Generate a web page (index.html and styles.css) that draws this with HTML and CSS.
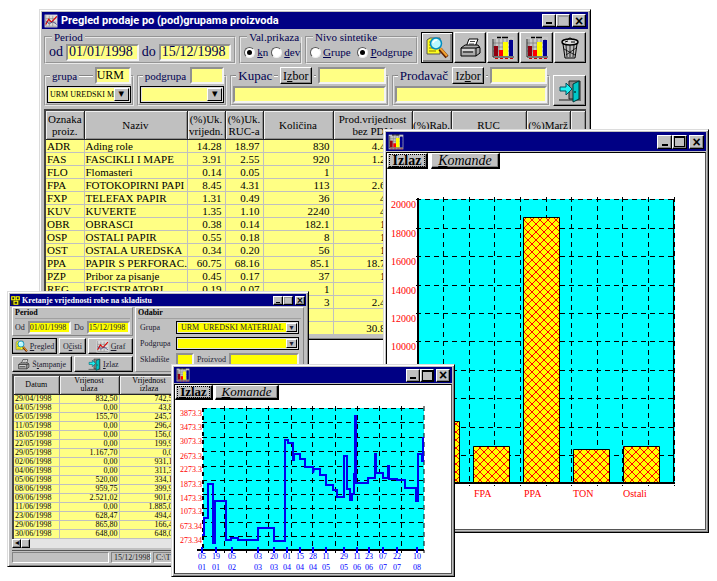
FILE: index.html
```html
<!DOCTYPE html>
<html lang="hr">
<head>
<meta charset="utf-8">
<title>Pregled prodaje po (pod)grupama proizvoda</title>
<link rel="stylesheet" href="styles.css">
</head>
<body>
<svg class="defs" aria-hidden="true">
  <symbol id="i-chart" viewBox="0 0 24 24">
    <path d="M1 1h22v22H1z" fill="#c8c8c8"/>
    <path d="M4 3v17M8 3v17M12 3v17M16 3v17M20 3v17M2 7h20M2 11h20M2 15h20" stroke="#777" stroke-width=".7"/>
    <path d="M6 1.500h4M11 1.500h6" stroke="#000" stroke-width="1.500"/>
    <path d="M3 10h4v10H3z" fill="#900010"/><path d="M8 14h4v6H8z" fill="#f00"/>
    <path d="M12 6h5v14h-5z" fill="#ff0"/><path d="M18 4h4v16h-4z" fill="#000090"/>
    <path d="M2 3v18h21" stroke="#222" fill="none"/><path d="M4 22.500h3m2 0h3m2 0h3m2 0h3" stroke="#c00"/>
  </symbol>
  <symbol id="i-find" viewBox="0 0 24 24">
    <path d="M2 4l3-2h10v16H2z" fill="#ffff20" stroke="#555"/>
    <path d="M4 6h7M4 9h7M4 12h7M4 15h7" stroke="#887700"/>
    <path d="M15 13l7 8" stroke="#602000" stroke-width="4"/><path d="M15 12l7 8" stroke="#f0a030" stroke-width="2"/>
    <circle cx="11" cy="7.500" r="5.500" fill="#b8f8ff" stroke="#008cc0" stroke-width="1.500"/>
    <path d="M8 7q1-3 4-3" stroke="#fff" fill="none" stroke-width="1.500"/>
  </symbol>
  <symbol id="i-print" viewBox="0 0 24 24">
    <path d="M8 11l3-8h9l-3 8z" fill="#fff" stroke="#000"/><path d="M12 5.500h5M11 8h5" stroke="#444"/>
    <path d="M3 12l4-3h13l2 3v5l-4 3H3z" fill="#aaa" stroke="#000"/>
    <path d="M3 12h15v8M18 12l4-1M5 16h10" fill="none" stroke="#000"/><path d="M4 14h12" stroke="#fff"/>
  </symbol>
  <symbol id="i-trash" viewBox="0 0 24 24">
    <path d="M5 8h14l-2 14H7z" fill="#bbb" stroke="#000"/>
    <path d="M8 9l1 12M12 9v12M16 9l-1 12M6 13l11 6M18 12L8 19" stroke="#000" stroke-width=".8"/>
    <ellipse cx="12" cy="6" rx="8" ry="3" fill="#ddd" stroke="#000" stroke-width="1.500"/>
    <path d="M9 4q3-4 6 0M7 6l3-1M13 6h4" stroke="#000" fill="none"/>
  </symbol>
  <symbol id="i-exit" viewBox="0 0 24 24">
    <path d="M11 2h11v18H11z" fill="#888" stroke="#222"/><path d="M1 21h22" stroke="#222"/>
    <path d="M15 5l6-3v18l-6 3z" fill="#00c8c8" stroke="#003838"/><path d="M17 12v2" stroke="#000"/>
    <path d="M2 8h6V4l6 6-6 6v-4H2z" fill="#20f0f0" stroke="#005060"/>
  </symbol>
  <symbol id="i-graph" viewBox="0 0 24 24">
    <path d="M1 1h22v22H1z" fill="#ddd"/><path d="M3 2v19h19M3 8h18M3 14h18M9 3v18M15 3v18" stroke="#777" fill="none"/>
    <path d="M3 18l5-9 5 5 9-10" stroke="#d00" fill="none" stroke-width="2"/><path d="M3 12l6 5 6-4 7 5" stroke="#448" fill="none" stroke-width="1.500"/>
  </symbol>
  <symbol id="i-app" viewBox="0 0 12 12">
    <path d="M0 0h12v12H0z" fill="#222"/><path d="M1 1h4v4H1zM7 1h4v4H7zM4 7h5v4H4z" fill="none" stroke="#ff0" stroke-width="1.500"/>
  </symbol>
</svg>

<main class="desktop">

<section class="window sales">
  <header class="title">
    <svg class="ico"><use href="#i-graph"/></svg>
    <h1>Pregled prodaje po (pod)grupama proizvoda</h1>
    <div class="caption"><button aria-label="Minimize" class="min"></button><button aria-label="Maximize" class="max off"></button><button aria-label="Close" class="close">×</button></div>
  </header>
  <div class="pane">
    <div class="row first">
      <fieldset><legend>Period</legend>
        <div class="dates"><label for="od">od</label><input id="od" value="01/01/1998"><label for="do">do</label><input id="do" value="15/12/1998"></div>
      </fieldset>
      <fieldset><legend>Val.prikaza</legend>
        <div class="radios"><label><input type="radio" name="val" checked><span><u>k</u>n</span></label><label><input type="radio" name="val"><span><u>d</u>ev</span></label></div>
      </fieldset>
      <fieldset><legend>Nivo sintetike</legend>
        <div class="radios"><label><input type="radio" name="nivo"><span><u>G</u>rupe</span></label><label><input type="radio" name="nivo" checked><span><u>P</u>odgrupe</span></label></div>
      </fieldset>
      <div class="tools">
        <button class="default" aria-label="Pregled"><svg><use href="#i-find"/></svg></button>
        <button aria-label="Ispis"><svg><use href="#i-print"/></svg></button>
        <button aria-label="Graf 1"><svg><use href="#i-chart"/></svg></button>
        <button aria-label="Graf 2"><svg><use href="#i-chart"/></svg></button>
        <button aria-label="Brisanje"><svg><use href="#i-trash"/></svg></button>
      </div>
    </div>
    <div class="row second">
      <fieldset><legend><span class="head"><label for="gr">grupa</label><i></i><input class="code" id="gr" value="URM"></span></legend>
        <span class="combo small"><select aria-label="grupa"><option>URM UREDSKI M</option></select></span>
      </fieldset>
      <fieldset><legend><span class="head"><label for="pg">podgrupa</label><i></i><input class="code" id="pg"></span></legend>
        <span class="combo small"><select aria-label="podgrupa"><option></option></select></span>
      </fieldset>
      <fieldset><legend><span class="head big"><label for="ku">Kupac</label><i></i><button>I<u>z</u>bor</button><i class="dash"></i><input class="name" id="ku"></span></legend>
        <input class="wide" aria-label="Naziv kupca">
      </fieldset>
      <fieldset><legend><span class="head big"><label for="pr">Prodavač</label><i></i><button>Iz<u>b</u>or</button><i class="dash"></i><input class="name" id="pr"></span></legend>
        <input class="wide" aria-label="Naziv prodavača">
      </fieldset>
      <div class="tools"><button aria-label="Izlaz"><svg><use href="#i-exit"/></svg></button></div>
    </div>
    <table class="grid">
      <colgroup><col class="c1"><col class="c2"><col class="c3"><col class="c3"><col class="c4"><col class="c5"><col class="c1"><col class="c6"><col class="c7"><col></colgroup>
      <thead><tr><th>Oznaka<br>proiz.</th><th>Naziv</th><th>(%)Uk.<br>vrijedn.</th><th>(%)Uk.<br>RUC-a</th><th>Količina</th><th>Prod.vrijednost<br>bez PDV</th><th>(%)Rab.</th><th>RUC</th><th>(%)Marž</th><th></th></tr></thead>
      <tbody>
      <tr><td>ADR<td>Ading role<td>14.28<td>18.97<td>830<td>4.4<td><td><td><td></tr>
      <tr><td>FAS<td>FASCIKLI I MAPE<td>3.91<td>2.55<td>920<td>1.2<td><td><td><td></tr>
      <tr><td>FLO<td>Flomasteri<td>0.14<td>0.05<td>1<td><td><td><td><td></tr>
      <tr><td>FPA<td>FOTOKOPIRNI PAPI<td>8.45<td>4.31<td>113<td>2.6<td><td><td><td></tr>
      <tr><td>FXP<td>TELEFAX PAPIR<td>1.31<td>0.49<td>36<td>4<td><td><td><td></tr>
      <tr><td>KUV<td>KUVERTE<td>1.35<td>1.10<td>2240<td>4<td><td><td><td></tr>
      <tr><td>OBR<td>OBRASCI<td>0.38<td>0.14<td>182.1<td>1<td><td><td><td></tr>
      <tr><td>OSP<td>OSTALI PAPIR<td>0.55<td>0.18<td>8<td>1<td><td><td><td></tr>
      <tr><td>OST<td>OSTALA UREDSKA<td>0.34<td>0.20<td>56<td>1<td><td><td><td></tr>
      <tr><td>PPA<td>PAPIR S PERFORAC.<td>60.75<td>68.16<td>85.1<td>18.7<td><td><td><td></tr>
      <tr><td>PZP<td>Pribor za pisanje<td>0.45<td>0.17<td>37<td>1<td><td><td><td></tr>
      <tr><td>REG<td>REGISTRATORI<td>0.19<td>0.07<td>1<td><td><td><td><td></tr>
      <tr><td><td><td><td><td>3<td>2.4<td><td><td><td></tr>
      <tr><td><td><td><td><td><td><td><td><td><td></tr>
      <tr><td><td><td><td><td><td>30.8<td><td><td><td></tr>
      </tbody>
    </table>
  </div>
</section>

<section class="window bars">
  <header class="title">
    <svg class="ico"><use href="#i-chart"/></svg>
    <div class="caption"><button aria-label="Minimize" class="min"></button><button aria-label="Maximize" class="max"></button><button aria-label="Close" class="close">×</button></div>
  </header>
  <div class="canvas">
    <nav class="menu"><button class="quit"><span><u>I</u>zlaz</span></button><button class="cmd"><u>K</u>omande</button></nav>
    <svg class="plot" viewBox="387 169 318 360">
      <defs><pattern id="hatch" width="8" height="8" patternUnits="userSpaceOnUse"><path d="M0 0h8v8H0z" fill="#ff0"/><path d="M-1-1l10 10M9-1L-1 9" stroke="#f00" stroke-width="1"/></pattern></defs>
      <path d="M418 199h257v284H418z" fill="#0ff"/>
      <path class="mesh" d="M443.500 197v289M469.500 197v289M494.500 197v289M520.500 197v289M546.500 197v289M571.500 197v289M597.500 197v289M622.500 197v289M648.500 197v289M674.500 197v289M416 199.500h260M416 228.500h260M416 256.500h260M416 285.500h260M416 313.500h260M416 341.500h260M416 370.500h260M416 398.500h260M416 427.500h260M416 455.500h260"/>
      <path d="M418 198v285h257" fill="none" stroke="#000" stroke-width="2"/><path d="M673.500 199v284" stroke="#000"/>
      <g fill="url(#hatch)" stroke="#000"><path d="M423.500 421.500h36v61h-36zM473.500 446.500h36v36h-36zM523.500 217.500h36v265h-36zM573.500 449.500h36v33h-36zM623.500 446.500h36v36h-36z"/></g>
      <g class="red" text-anchor="end"><text x="416" y="208">20000</text><text x="416" y="237">18000</text><text x="416" y="265">16000</text><text x="416" y="294">14000</text><text x="416" y="322">12000</text><text x="416" y="350">10000</text></g>
      <g class="red"><text x="474" y="497">FPA</text><text x="524" y="497">PPA</text><text x="573" y="497">TON</text><text x="623" y="497">Ostali</text></g>
    </svg>
  </div>
</section>

<section class="window stock">
  <header class="title">
    <svg class="ico"><use href="#i-app"/></svg>
    <h2>Kretanje vrijednosti robe na skladistu</h2>
    <div class="caption"><button aria-label="Minimize" class="min"></button><button aria-label="Maximize" class="max off"></button><button aria-label="Close" class="close">×</button></div>
  </header>
  <div class="pane">
    <div class="filters">
      <div class="left">
        <div class="box"><h3>Period</h3>
          <div class="range"><label for="od2">Od</label><input id="od2" value="01/01/1998"><label for="do2">Do</label><input id="do2" value="15/12/1998"></div>
        </div>
        <div class="acts three"><button class="default"><svg><use href="#i-find"/></svg><span><u>P</u>regled</span></button><button><span>O<u>č</u>isti</span></button><button><svg><use href="#i-graph"/></svg><span><u>G</u>raf</span></button></div>
        <div class="acts"><button><svg><use href="#i-print"/></svg><span>Š<u>t</u>ampanje</span></button><button><svg><use href="#i-exit"/></svg><span><u>I</u>zlaz</span></button></div>
      </div>
      <div class="box choice"><h3>Odabir</h3>
        <div class="form">
          <label for="g3">Grupa</label><span class="combo"><select id="g3"><option>URM&nbsp; UREDSKI MATERIJAL</option></select></span>
          <label for="p3">Podgrupa</label><span class="combo"><select id="p3"><option></option></select></span>
          <label for="s3">Skladište</label><div class="pair"><input id="s3"><label for="z3">Proizvod</label><input id="z3"></div>
        </div>
      </div>
    </div>
    <table class="grid">
      <colgroup><col class="d1"><col class="d2"><col class="d2"><col></colgroup>
      <thead><tr><th>Datum</th><th>Vrijenost<br>ulaza</th><th>Vrijednost<br>izlaza</th><th></th></tr></thead>
      <tbody>
      <tr><td>29/04/1998<td>832,50<td>742,5<td></tr>
      <tr><td>04/05/1998<td>0,00<td>43,8<td></tr>
      <tr><td>05/05/1998<td>155,70<td>245,7<td></tr>
      <tr><td>11/05/1998<td>0,00<td>296,4<td></tr>
      <tr><td>18/05/1998<td>0,00<td>156,0<td></tr>
      <tr><td>22/05/1998<td>0,00<td>199,9<td></tr>
      <tr><td>29/05/1998<td>1.167,70<td>0,0<td></tr>
      <tr><td>02/06/1998<td>0,00<td>931,1<td></tr>
      <tr><td>04/06/1998<td>0,00<td>311,3<td></tr>
      <tr><td>05/06/1998<td>520,00<td>334,1<td></tr>
      <tr><td>08/06/1998<td>959,75<td>399,9<td></tr>
      <tr><td>09/06/1998<td>2.521,02<td>901,6<td></tr>
      <tr><td>11/06/1998<td>0,00<td>1.885,0<td></tr>
      <tr><td>23/06/1998<td>628,47<td>494,4<td></tr>
      <tr><td>29/06/1998<td>865,80<td>166,4<td></tr>
      <tr><td>30/06/1998<td>648,00<td>648,0<td></tr>
      </tbody>
    </table>
    <div class="scroll"><button aria-label="Lijevo">◂</button><button aria-label="Klizač"></button></div>
    <footer class="status"><span></span><span>15/12/1998</span><span>C:\TEMP</span></footer>
  </div>
</section>

<section class="window trend">
  <header class="title">
    <svg class="ico"><use href="#i-chart"/></svg>
    <div class="caption"><button aria-label="Minimize" class="min"></button><button aria-label="Maximize" class="max"></button><button aria-label="Close" class="close">×</button></div>
  </header>
  <div class="canvas">
    <nav class="menu"><button class="quit"><span><u>I</u>zlaz</span></button><button class="cmd"><u>K</u>omande</button></nav>
    <svg class="plot" viewBox="175 400 276 173">
      <path d="M203 408h221v142H203z" fill="#0ff"/>
      <path class="mesh" d="M224.500 406v147M246.500 406v147M268.500 406v147M291.500 406v147M312.500 406v147M335.500 406v147M357.500 406v147M379.500 406v147M401.500 406v147M424 406v147M202 408.500h223M202 422.500h223M202 437.500h223M202 451.500h223M202 466.500h223M202 480.500h223M202 494.500h223M202 508.500h223M202 522.500h223M202 536.500h223"/>
      <path d="M197 550h227" stroke="#000" stroke-width="2"/><path d="M203 408v142" stroke="#000" stroke-width="2" stroke-dasharray="4 4"/>
      <path d="M202 547v6M216 547v6M232 547v6M258 547v6M274 547v6M287 547v6M300 547v6M313 547v6M326 547v6M344 547v6M357 547v6M369 547v6M383 547v6M397 547v6M417 547v6" stroke="#00f" stroke-width="2"/>
      <polyline fill="none" stroke="#0000f0" stroke-width="2" points="202,535 204,535 204,518 208,518 208,484 213,484 213,543 215,543 215,501 226,501 226,540 231,540 231,538 238,538 238,540 258,540 258,528 274,528 274,541 285,541 285,440 288,440 288,443 293,443 293,460 294,460 294,454 300,454 300,459 305,459 305,467 313,467 313,473 314,469 320,469 320,475 326,475 326,485 333,485 333,490 337,490 337,497 344,497 344,456 347,456 347,489 350,489 350,500 352,500 352,494 354,494 354,474 355,474 355,416 356,416 356,483 368,483 368,478 375,478 375,454 376,454 376,473 383,473 383,478 388,478 388,466 389,466 389,479 397,479 397,480 405,480 405,488 416,488 416,501 418,501 418,454 422,454 422,461 423,461 423,437"/>
      <g class="ticks y" text-anchor="end"><text x="202" y="416">3873.3</text><text x="202" y="430">3473.3</text><text x="202" y="444">3073.3</text><text x="202" y="459">2673.3</text><text x="202" y="472">2273.3</text><text x="202" y="487">1873.3</text><text x="202" y="501">1473.3</text><text x="202" y="514">1073.3</text><text x="202" y="529">673.34</text><text x="202" y="543">273.34</text></g>
      <g class="ticks x" text-anchor="middle"><text x="202" y="559">05</text><text x="216" y="559">19</text><text x="232" y="559">05</text><text x="258" y="559">03</text><text x="274" y="559">20</text><text x="287" y="559">01</text><text x="300" y="559">15</text><text x="313" y="559">28</text><text x="326" y="559">11</text><text x="344" y="559">29</text><text x="357" y="559">11</text><text x="369" y="559">23</text><text x="383" y="559">07</text><text x="397" y="559">22</text><text x="417" y="559">10</text>
      <text x="202" y="570">01</text><text x="216" y="570">01</text><text x="232" y="570">02</text><text x="258" y="570">03</text><text x="274" y="570">03</text><text x="287" y="570">04</text><text x="300" y="570">04</text><text x="313" y="570">04</text><text x="326" y="570">05</text><text x="344" y="570">05</text><text x="357" y="570">06</text><text x="369" y="570">06</text><text x="383" y="570">07</text><text x="397" y="570">07</text><text x="417" y="570">08</text></g>
    </svg>
  </div>
</section>

</main>
</body>
</html>
```

FILE: styles.css
```css
* { box-sizing: border-box; }
body { margin: 0; background: #fff; overflow: hidden; font-family: "Liberation Serif", serif; font-size: 11px; color: #000; }
.defs { position: absolute; width: 0; height: 0; }
.desktop { position: relative; min-height: 100vh; }
h1, h2, h3 { margin: 0; }
button, input, select { font: inherit; color: inherit; margin: 0; padding: 0; border-radius: 0; min-width: 0; }

/* windows */
.window { position: absolute; background: #c0c0c0; border: 1px solid; border-color: #dcdcdc #000 #000 #dcdcdc; padding: 2px; box-shadow: inset 1px 1px #fff, inset -1px -1px #848484; }
.sales { left: 39px; top: 9px; width: 552px; }
.bars { left: 383px; top: 129px; width: 326px; }
.stock { left: 7px; top: 291px; width: 302px; }
.trend { left: 171px; top: 364px; width: 284px; }

.title { display: flex; align-items: center; gap: 3px; height: 17px; padding: 0 2px; background: #000084; color: #fff; }
.bars .title { height: 20px; border-bottom: 1px solid #c0c0c0; }
.trend .title { border-bottom: 1px solid #c0c0c0; }
.title h1 { font: bold 11px Roboto, "Liberation Sans", sans-serif; white-space: nowrap; }
.title h2 { font: bold 8px "Liberation Serif", serif; white-space: nowrap; }
.ico { width: 14px; height: 14px; }
.bars .ico { width: 16px; height: 16px; }
.caption { display: flex; margin-left: auto; }
.caption button { width: 14px; height: 13px; background: #c0c0c0; border: 1px solid; border-color: #fff #000 #000 #fff; box-shadow: inset -1px -1px #848484; color: #000; display: grid; place-items: center; font: bold 14px/10px "Liberation Sans", sans-serif; }
.caption .close { margin-left: 2px; }
.bars .caption button { width: 15px; height: 14px; }
.min::before { content: ""; width: 6px; height: 2px; background: #000; align-self: end; margin-bottom: 2px; }
.max::before { content: ""; width: 9px; height: 8px; border: 1px solid #000; border-top-width: 2px; }
.caption .off::before { border-color: #999; }

/* form groups */
.pane { padding: 2px; }
.row { display: grid; }
.first { grid-template-columns: 193fr 63fr 113fr 166fr; gap: 3px; }
.second { grid-template-columns: 90fr 91fr 159fr 159fr 33fr; gap: 3px; margin-top: 3px; }
fieldset { min-width: 0; margin: 0; padding: 0 3px 1px; border: 2px groove #e8e8e8; }
legend { padding: 0 2px; margin-left: 3px; font-size: 11px; line-height: 12px; color: #000050; white-space: nowrap; }
.dates, .radios { display: flex; align-items: center; gap: 3px; height: 18px; color: #000050; font-size: 14px; }
.dates input { flex: 1; height: 17px; padding-left: 1px; }
.radios { font-size: 11px; white-space: nowrap; justify-content: space-between; }
.radios label { display: flex; align-items: center; gap: 2px; }
.radios input { appearance: none; width: 11px; height: 11px; border-radius: 50%; background: #fff; border: 1px solid; border-color: #555 #eee #eee #555; display: grid; place-items: center; }
.radios input:checked::before { content: ""; width: 5px; height: 5px; border-radius: 50%; background: #000; }
input, select { background: #ffff84; border: 2px solid; border-color: #909090 #f4f4f4 #f4f4f4 #909090; outline: 0; }

.second fieldset { padding: 0 1px 1px; }
.second legend { width: 100%; margin: 0; padding: 0; }
.head { display: flex; align-items: center; height: 17px; gap: 2px; }
.head.big { font-size: 13px; }
.head i, .head::before { content: ""; flex: 1; border-top: 1px solid #848484; border-bottom: 1px solid #fff; }
.head::before { flex: 0 0 3px; }
.head input { height: 17px; font-size: 12px; color: #000; }
.head .code { width: 36px; }
.head .name { width: 68px; }
.head .dash { flex: 0 0 2px; }
.head button { flex: none; width: 32px; height: 17px; font-size: 12px; line-height: 12px; color: #000; }
.wide { display: block; width: 100%; height: 17px; margin-top: 2px; }
.combo { display: flex; position: relative; }
.combo select { appearance: none; width: 100%; height: 17px; margin-top: 2px; border: 1px solid #000; outline: 1px solid #e0e0e0; outline-offset: -2px; padding-left: 4px; }
.combo.small select { font-size: 8px; padding-left: 2px; }
.combo::after { content: "▾"; position: absolute; right: 2px; top: 4px; bottom: 2px; width: 13px; background: #c0c0c0; border: 1px solid; border-color: #fff #000 #000 #fff; font: 11px/9px "DejaVu Sans", sans-serif; text-align: center; pointer-events: none; }

button { background: #c0c0c0; border: 1px solid; border-color: #fff #000 #000 #fff; box-shadow: inset -1px -1px #848484; }
.tools { display: flex; align-self: center; gap: 1px; }
.tools button { flex: 1; height: 31px; display: grid; place-items: center; }
.tools svg { width: 24px; height: 24px; }
.second .tools { align-self: end; }
.tools .default { border-color: #000; box-shadow: inset 1px 1px #fff, inset -2px -2px #848484; }

/* data grids */
.grid { width: 100%; table-layout: fixed; border-collapse: collapse; border-left: 2px solid #444; border-top: 2px solid #444; }
.sales .grid { margin-top: 3px; }
.grid th { background: #c0c0c0; font-weight: normal; border: 1px solid #222; box-shadow: inset 1px 1px #f0f0f0, inset -1px -1px #909090; height: 29px; padding: 0; line-height: 12px; white-space: nowrap; overflow: hidden; }
.grid td { background: #ffff84; border: 1px solid #c0c0c0; height: 13px; line-height: 12px; padding: 0 3px 0 2px; text-align: right; white-space: nowrap; overflow: hidden; }
.grid td:first-child, .sales .grid td:nth-child(2) { text-align: left; padding-right: 0; padding-left: 1px; }
.c1 { width: 39px; } .c2 { width: 103px; } .c3 { width: 38px; } .c4 { width: 70px; }
.c5 { width: 79px; } .c6 { width: 75px; } .c7 { width: 44px; }
.sales .grid td:nth-child(6) { padding-right: 26px; }

/* chart windows */
.canvas { background: #fff; border: 1px solid #000; border-right-color: #555; border-bottom-color: #555; }
.menu { display: flex; gap: 3px; height: 16px; }
.menu button { border-width: 1px 2px 2px 1px; font-size: 14px; line-height: 12px; }
.menu .quit { width: 41px; padding: 0 1px; font-weight: bold; }
.menu .quit span { display: block; border: 1px dotted #000; line-height: 11px; }
.menu .cmd { width: 69px; font-style: italic; }
.trend .menu { height: 15px; gap: 2px; }
.trend .menu button { font-size: 13px; }
.trend .menu .quit { width: 38px; }
.trend .menu .quit span { line-height: 10px; }
.trend .menu .cmd { width: 64px; }
.plot { display: block; width: 100%; height: auto; }
.mesh { fill: none; stroke: #000; stroke-dasharray: 5 4; }
.red { fill: #f00; font-size: 10px; }
.ticks { font-size: 8px; }
.y { fill: #f00; } .x { fill: #00f; }

/* stock window */
.stock { font-size: 8px; }
.stock .pane { padding: 1px 2px; }
.stock .title { height: 12px; padding: 0 1px; gap: 2px; }
.stock .ico { width: 9px; height: 9px; }
.stock .caption button { width: 10px; height: 9px; font-size: 10px; line-height: 7px; }
.stock .min::before { width: 4px; height: 1px; margin-bottom: 1px; }
.stock .max::before { width: 6px; height: 5px; border-width: 1px; }
.filters { display: grid; grid-template-columns: minmax(0, 121fr) minmax(0, 169fr); gap: 2px; color: #202030; }
.left { display: flex; flex-direction: column; gap: 2px; min-width: 0; }
.box { border: 1px solid; border-color: #fff #848484 #848484 #fff; padding: 0 2px 1px; }
.box h3 { font-size: 8px; line-height: 10px; color: #000; border-bottom: 1px solid #a0a0a0; }
.range { display: flex; align-items: center; gap: 3px; margin-top: 2px; }
.range input { flex: 1; width: 100%; height: 13px; }
.stock input, .stock select { background: #ff0; height: 13px; }
.acts { display: grid; grid-template-columns: 1fr 1fr; gap: 2px; }
.acts.three { grid-template-columns: minmax(0, 45fr) minmax(0, 27fr) minmax(0, 45fr); }
.acts button { height: 16px; display: flex; align-items: center; justify-content: center; gap: 2px; white-space: nowrap; }
.acts svg { width: 13px; height: 13px; }
.acts .default { border-color: #000; }
.form { display: grid; grid-template-columns: 34px minmax(0, 1fr); gap: 3px 2px; align-items: center; padding: 2px 2px 0; }
.form .combo select { margin: 0; }
.form .combo::after { top: 2px; width: 9px; font-size: 8px; line-height: 7px; }
.pair { display: flex; align-items: center; gap: 3px; }
.pair input:first-child { width: 18px; }
.pair input:last-child { flex: 1; width: 100%; }
.stock .grid { margin-top: 2px; }
.stock .grid th { height: 19px; line-height: 8px; }
.stock .grid td { height: 9px; line-height: 8px; padding: 0 1px; }
.stock .grid td:nth-child(3) { padding-right: 6px; }
.d1 { width: 46px; } .d2 { width: 60px; }
.scroll { display: flex; height: 9px; background: #e4e4e4; }
.scroll button { width: 9px; font-size: 8px; line-height: 6px; }
.status { display: flex; gap: 2px; margin-top: 2px; border-top: 1px solid #555; padding-top: 1px; color: #222; }
.status span { height: 11px; line-height: 10px; border: 1px solid; border-color: #848484 #fff #fff #848484; padding: 0 2px; }
.status span:nth-child(1) { width: 97px; }
.status span:nth-child(2) { width: 40px; }
.status span:nth-child(3) { flex: 1; }
```
